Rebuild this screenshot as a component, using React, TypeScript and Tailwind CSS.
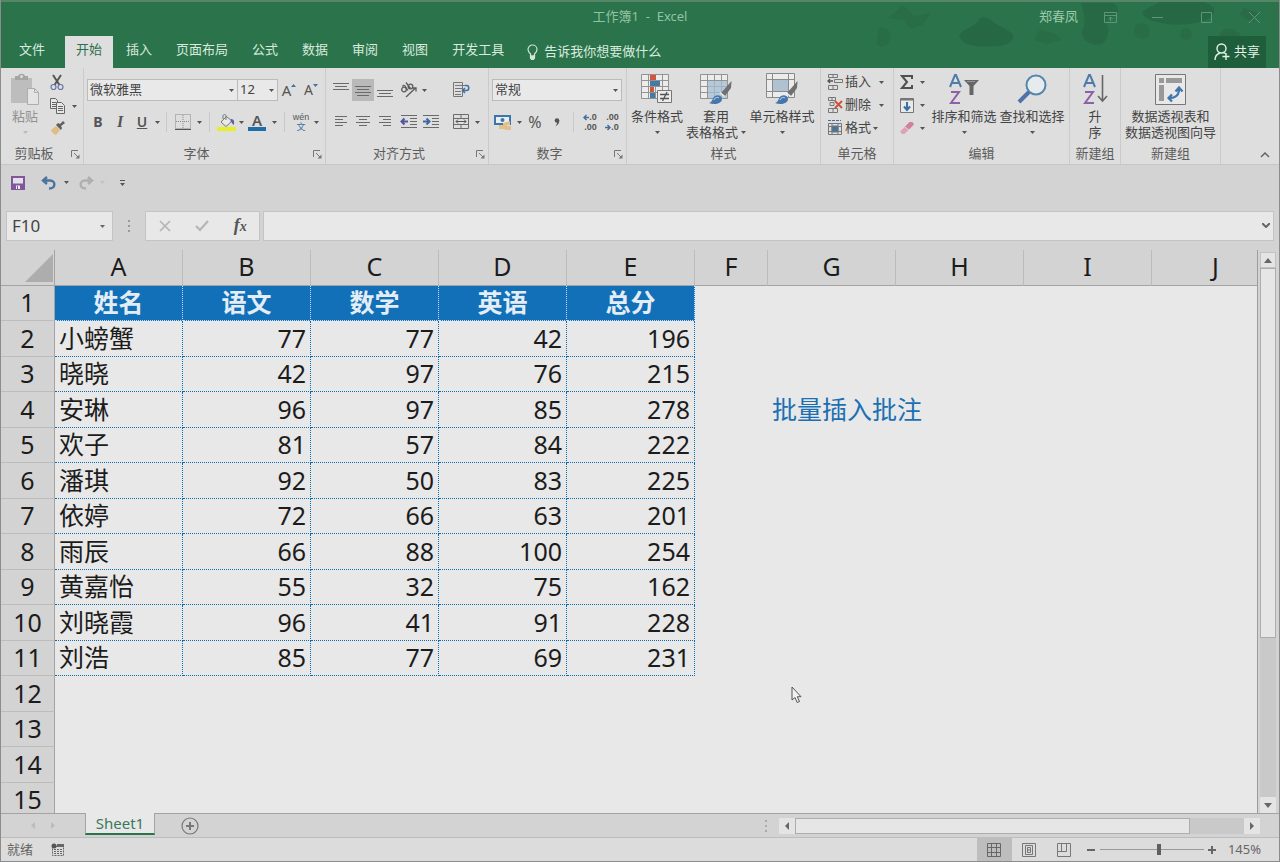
import { useState } from "react";
import type { ReactNode } from "react";

const columns = ["A", "B", "C", "D", "E", "F", "G", "H", "I", "J"];

const sheet: (string | number)[][] = [
  ["姓名", "语文", "数学", "英语", "总分"],
  ["小螃蟹", 77, 77, 42, 196],
  ["晓晓", 42, 97, 76, 215],
  ["安琳", 96, 97, 85, 278, "", "批量插入批注"],
  ["欢子", 81, 57, 84, 222],
  ["潘琪", 92, 50, 83, 225],
  ["依婷", 72, 66, 63, 201],
  ["雨辰", 66, 88, 100, 254],
  ["黄嘉怡", 55, 32, 75, 162],
  ["刘晓霞", 96, 41, 91, 228],
  ["刘浩", 85, 77, 69, 231],
  [],
  [],
  [],
  [],
];

const tabs = ["开始", "插入", "页面布局", "公式", "数据", "审阅", "视图", "开发工具"];

function Caret({ className = "text-[#555]" }: { className?: string }) {
  return (
    <svg className={`shrink-0 ${className}`} width="5" height="3" viewBox="0 0 5 3" fill="currentColor">
      <path d="M0 0h5L2.5 3z" />
    </svg>
  );
}

function CaretButton({ label, className = "w-2" }: { label: string; className?: string }) {
  return (
    <button aria-label={label} className={`flex h-[22px] shrink-0 items-center justify-center ${className}`}>
      <Caret />
    </button>
  );
}

function IconButton({
  label,
  className = "w-[22px]",
  children,
}: {
  label: string;
  className?: string;
  children: ReactNode;
}) {
  return (
    <button
      aria-label={label}
      className={`flex h-[22px] shrink-0 items-center justify-center text-[#555] ${className}`}
    >
      {children}
    </button>
  );
}

function Separator() {
  return <span className="mx-[5px] h-5 w-px shrink-0 bg-[#c8c8c8]" />;
}

function Group({
  title,
  launcher = false,
  className,
  children,
}: {
  title: string;
  launcher?: boolean;
  className: string;
  children: ReactNode;
}) {
  return (
    <section className={`flex shrink-0 flex-col border-r border-[#cbcbcb] ${className}`}>
      <div className="h-[76px]">{children}</div>
      <div className="flex h-5 items-center">
        <span className="flex-1 text-center text-[#5c5c5c]">{title}</span>
        {launcher && (
          <button aria-label={`${title}设置`} className="flex h-4 w-4 items-center justify-center">
            <svg width="9" height="9" viewBox="0 0 9 9" fill="none" stroke="#777">
              <path d="M.5 7V.5H7M3 3l4 4" />
              <path d="M8.500 4.500v4h-4z" fill="#777" stroke="none" />
            </svg>
          </button>
        )}
      </div>
    </section>
  );
}

function BigButton({
  icon,
  lines,
  className,
  caret = false,
}: {
  icon: ReactNode;
  lines: string[];
  className: string;
  caret?: boolean;
}) {
  return (
    <button className={`flex shrink-0 flex-col items-center pt-[5px] leading-4 text-[#444] ${className}`}>
      <span className="mb-[3px] flex h-8 items-center justify-center">{icon}</span>
      <span className="whitespace-nowrap">{lines[0]}</span>
      <span className="flex h-4 items-center gap-[3px] whitespace-nowrap">
        {lines[1]}
        {caret && <Caret />}
      </span>
    </button>
  );
}

function Lines({ rows }: { rows: [number, number, number][] }) {
  return (
    <svg width="16" height="16" viewBox="0 0 16 16" stroke="#6a6a6a">
      {rows.map(([x1, x2, y]) => (
        <path key={y} d={`M${x1} ${y}.5H${x2}`} />
      ))}
    </svg>
  );
}

function Indent({ right = false }: { right?: boolean }) {
  return (
    <svg width="18" height="16" viewBox="0 0 18 16" fill="none">
      <path d="M1 1.500h16M10 4.500h7M10 7.500h7M10 10.500h7M1 13.500h16" stroke="#6a6a6a" />
      {right ? (
        <path d="M1 7.500h6M4.500 4.500l3 3-3 3" stroke="#3d68a5" strokeWidth="2" />
      ) : (
        <path d="M2 7.500h6M4.500 4.500l-3 3 3 3" stroke="#5257a0" strokeWidth="2" />
      )}
    </svg>
  );
}

function TableGrid() {
  return (
    <path
      d="M.500 1.500h27v24H.500zM.500 7.500h27M.500 13.500h27M.500 19.500h27M7.500 1.500v24M14.500 1.500v24M21.500 1.500v24"
      fill="#ececec"
      stroke="#939393"
    />
  );
}

function StyleBrush() {
  return (
    <>
      <path d="M31.500 8l-.5 7-6 8-4-3z" fill="#707070" />
      <path d="M20 19.500l4.500 4" stroke="#eee" strokeWidth="1.500" />
      <path d="M9 30c4-1 3-5 6-7 3-2 7 0 7 3 0 5-8 6-13 4z" fill="#4577ad" />
      <path d="M14 27c1-3 4-3 5-2" stroke="#c8dcef" fill="none" />
    </>
  );
}

function SortLetters() {
  return (
    <>
      <path d="M1 13L6 1h1l5 12M3 9h7" stroke="#4e7ba8" strokeWidth="2" fill="none" />
      <path d="M2 18h8L2 29h9" stroke="#8b62a6" strokeWidth="2" fill="none" />
    </>
  );
}

function TitleBar() {
  return (
    <header className="relative bg-[#2b744b] text-[13px]">
      <svg
        className="absolute right-0 top-0 h-12 w-[460px]"
        viewBox="0 0 460 48"
        fill="#276542"
        aria-hidden="true"
      >
        <path d="M140 35c8-8 17-9 21-17 8-3 13 5 20 8l12 7c5 5-3 13-16 13-18 2-35 0-37-11z" opacity=".8" />
        <path d="M262 3h32c10 6 4 15-7 17 4 9 3 19-4 24-11 3-21-4-20-13 5-9 2-17-1-28z" opacity=".75" />
        <path d="M340 2h45c18 6 12 19-15 22-22 3-50-4-46-13z" opacity=".8" />
        <path d="M84 5l11 11 17-3-8 12-13 4-7-9-15-2z" opacity=".45" />
        <path d="M60 28c9-2 13 5 11 11-2 10-13 9-14 3z" opacity=".5" />
        <circle cx="323" cy="31" r="8" opacity=".5" />
        <circle cx="367" cy="34" r="6" opacity=".5" />
        <path d="M400 35c7-11 20-6 24 4h-26zM425 8l14 5-5 9-14-7z" opacity=".6" />
        <path d="M220 30l15 3 8 7-16 4-12-4z" opacity=".4" />
      </svg>
      <div className="relative grid h-9 grid-cols-[1fr_auto_1fr] items-center border-t-2 border-[#568668] pb-1">
        <span />
        <h1 className="whitespace-pre text-[#91c2a2]">工作簿1  -  Excel</h1>
        <div className="flex items-center justify-end pr-px text-[#5f9675]">
          <span className="mr-2 text-[#9bcaac]">郑春凤</span>
          <button aria-label="功能区显示选项" className="flex w-12 justify-center">
            <svg width="13" height="11" viewBox="0 0 13 11" fill="none" stroke="currentColor">
              <path d="M.500.500h12v10H.500zM.500 3.500h12M6.500 9V5M4.500 7l2-2 2 2" />
            </svg>
          </button>
          <button aria-label="最小化" className="flex w-12 justify-center">
            <svg width="12" height="11" viewBox="0 0 12 11" stroke="currentColor"><path d="M0 5.500h11" /></svg>
          </button>
          <button aria-label="最大化" className="flex w-12 justify-center">
            <svg width="11" height="11" viewBox="0 0 11 11" fill="none" stroke="currentColor"><path d="M.500.500h10v10H.500z" /></svg>
          </button>
          <button aria-label="关闭" className="flex w-12 justify-center">
            <svg width="11" height="11" viewBox="0 0 11 11" stroke="currentColor"><path d="M0 0l11 11M11 0L0 11" /></svg>
          </button>
        </div>
      </div>
      <nav className="relative flex h-8 items-stretch gap-0.5 pl-[7px] pr-[13px] text-[#d8eadf]">
        <button className="mr-[7px] px-[11px] pb-1">文件</button>
        {tabs.map((tab) => (
          <button
            key={tab}
            className={`px-[11px] pb-1 ${tab === "开始" ? "bg-[#dedede] text-[#2f6e4c]" : ""}`}
          >
            {tab}
          </button>
        ))}
        <button className="flex items-center gap-1.5 px-2.5">
          <svg width="11" height="16" viewBox="0 0 11 16" fill="none" stroke="#cfe6d8" strokeWidth="1.2">
            <path d="M3.500 12V10C2 8.500 1 7.500 1 5.500a4.500 4.500 0 019 0C10 7.500 9 8.500 7.500 10v2z" />
            <path d="M3.500 12h4v2l-1 1.300h-2l-1-1.300z" fill="#cfe6d8" />
          </svg>
          告诉我你想要做什么
        </button>
        <button className="ml-auto flex items-center gap-1 bg-[#1f5e3b] px-1.5 text-[#e6f2ea]">
          <svg width="16" height="18" viewBox="0 0 16 18" fill="none" stroke="currentColor" strokeWidth="1.4">
            <circle cx="7.500" cy="5.500" r="4.500" />
            <path d="M1 17c0-4 2-6 5-7M9 9l3 2M12 10v7M8.500 13.500h7" />
          </svg>
          共享
        </button>
      </nav>
    </header>
  );
}

function Ribbon() {
  return (
    <div className="flex border-b border-[#c6c6c6] bg-[#dedede] text-[13px]">
      <Group title="剪贴板" launcher className="w-[83px]">
        <div className="flex pl-[7px]">
          <button className="flex w-[34px] flex-col items-center pt-[5px] leading-4 text-[#929292]">
            <svg className="mb-[3px]" width="30" height="32" viewBox="0 0 30 32">
              <path d="M1 5h21v25H1z" fill="#bdbdbd" />
              <path d="M5 3h3c1-3 6-3 7 0h3v4H5z" fill="#a5a5a5" />
              <circle cx="11.500" cy="3.500" r="1.500" fill="#dedede" />
              <path d="M17.500 15.500h7l4 4v12h-11z" fill="#e4e4e4" stroke="#adadad" />
              <path d="M24.500 15.500v4h4" fill="none" stroke="#adadad" />
            </svg>
            粘贴
            <span className="flex h-4 items-center"><Caret className="text-[#bbb]" /></span>
          </button>
          <div className="flex flex-col pl-1 pt-[3px]">
            <IconButton label="剪切">
              <svg width="14" height="17" viewBox="0 0 14 17" fill="none">
                <path d="M3 1l6.500 10M11 1L4.500 11" stroke="#555" strokeWidth="2" />
                <circle cx="3.500" cy="13" r="2.500" stroke="#6577a5" strokeWidth="1.2" />
                <circle cx="10.500" cy="13" r="2.500" stroke="#6577a5" strokeWidth="1.2" />
              </svg>
            </IconButton>
            <div className="flex items-center pt-0.5">
              <IconButton label="复制">
                <svg width="15" height="16" viewBox="0 0 15 16" fill="#e6e6e6" stroke="#666">
                  <path d="M.500.500h5l2 2v8h-7zM2 4.500h4M2 6.500h4M2 8.500h4" />
                  <path d="M6.500 4.500h5l3 3v8h-8zM8 8.500h5M8 10.500h5M8 12.500h5" />
                </svg>
              </IconButton>
              <CaretButton label="复制选项" className="w-3" />
            </div>
            <IconButton label="格式刷">
              <svg width="15" height="14" viewBox="0 0 15 14">
                <path d="M1 9l5-4 4 4-4 5c-2-1-4-2-5-5z" fill="#dfbd85" />
                <path d="M6 4l5 5 1-2-1-2 4-3-2-2-3 3-2-1z" fill="#5f5f5f" />
              </svg>
            </IconButton>
          </div>
        </div>
      </Group>

      <Group title="字体" launcher className="w-[242px]">
        <div className="flex flex-col gap-2.5 pl-[3px] pt-[11px]">
          <div className="flex items-center">
            <div className="relative">
              <select aria-label="字体" className="block h-[22px] w-[151px] appearance-none border border-[#bbb] bg-[#e9e9e9] px-0.5 text-[#444]">
                <option>微软雅黑</option>
              </select>
              <Caret className="pointer-events-none absolute right-1 top-2.5 text-[#555]" />
            </div>
            <div className="relative">
              <select aria-label="字号" className="block h-[22px] w-10 appearance-none border border-l-0 border-[#bbb] bg-[#e9e9e9] px-0.5 text-[#444]">
                <option>12</option>
              </select>
              <Caret className="pointer-events-none absolute right-1 top-2.5 text-[#555]" />
            </div>
            <IconButton label="增大字号">
              <span className="text-[15px]">A</span>
              <svg className="mb-2.5" width="5" height="3" viewBox="0 0 5 3" fill="#4b6f9c"><path d="M0 3h5L2.500 0z" /></svg>
            </IconButton>
            <IconButton label="减小字号">
              <span className="text-sm">A</span>
              <Caret className="mb-2.5 text-[#4b6f9c]" />
            </IconButton>
          </div>
          <div className="flex items-center">
            <IconButton label="加粗"><b className="text-sm">B</b></IconButton>
            <IconButton label="倾斜"><i className="font-['Liberation_Serif',serif] text-base font-bold">I</i></IconButton>
            <IconButton label="下划线"><u className="text-sm font-semibold">U</u></IconButton>
            <CaretButton label="下划线选项" />
            <Separator />
            <IconButton label="边框">
              <svg width="16" height="16" viewBox="0 0 16 16" fill="none" stroke="#888">
                <path d="M.500.500h15v14H.500zM8 1v13M1 7.500h14" strokeDasharray="1 1" />
                <path d="M0 15.500h16" stroke="#555" />
              </svg>
            </IconButton>
            <CaretButton label="边框选项" className="w-2.5" />
            <Separator />
            <IconButton label="填充颜色">
              <svg width="19" height="17" viewBox="0 0 19 17" fill="none">
                <path d="M9.500 2.500L4 8l5 4.500L15 7z" stroke="#777" fill="#e9e9e9" />
                <path d="M9 6V2c0-2-3-2-3 0v3" stroke="#777" />
                <path d="M14 5c3 0 4 3 2.500 6-1.500-1-1.500-3-3-3.500z" fill="#5c5fa0" />
                <path d="M0 13h19v4H0z" fill="#e8ee2a" />
              </svg>
            </IconButton>
            <CaretButton label="填充选项" />
            <IconButton label="字体颜色" className="w-6">
              <span className="border-b-4 border-[#1f6ea8] px-1 text-[15px] font-semibold leading-[13px]">A</span>
            </IconButton>
            <CaretButton label="颜色选项" className="w-2.5" />
            <Separator />
            <IconButton label="拼音">
              <span className="flex flex-col items-center font-['Liberation_Sans','Noto_Sans_CJK_SC',sans-serif] text-[9px] leading-[10px]">
                <span>wén</span>
                <span className="text-[#3f70a3]">文</span>
              </span>
            </IconButton>
            <CaretButton label="拼音选项" />
          </div>
        </div>
      </Group>

      <Group title="对齐方式" launcher className="w-[163px]">
        <div className="flex flex-col gap-2.5 pl-1 pt-[11px]">
          <div className="flex items-center">
            <IconButton label="顶端对齐"><Lines rows={[[0, 16, 1], [2, 14, 4], [0, 16, 7]]} /></IconButton>
            <IconButton label="垂直居中" className="w-[22px] bg-[#b9b9b9]"><Lines rows={[[0, 16, 4], [2, 14, 7], [0, 16, 10], [2, 14, 13]]} /></IconButton>
            <IconButton label="底端对齐"><Lines rows={[[0, 16, 8], [2, 14, 11], [0, 16, 14]]} /></IconButton>
            <IconButton label="方向" className="ml-0.5 w-[22px]">
              <svg width="18" height="16" viewBox="0 0 18 16" fill="none" stroke="#5c5c5c" strokeWidth="1.3">
                <circle cx="4" cy="7.500" r="2.300" />
                <path d="M2.500 4.500c1-2 3-1 3.500 1l2 3M6 .500l4.500 6" />
                <circle cx="10.500" cy="4.500" r="2.300" />
                <path d="M6 15L15.500 6M12.500 6h3.500v3.500" />
              </svg>
            </IconButton>
            <CaretButton label="方向选项" />
            <IconButton label="自动换行" className="ml-[22px] w-[22px]">
              <svg width="17" height="16" viewBox="0 0 17 16" fill="none" stroke="#777">
                <path d="M.500.500h9v14h-9zM2 3.500h10M2 6.500h7M2 9.500h6M2 12.500h6" />
                <path d="M12 3.500h1.500c3 0 3 5 0 5H10M12 6l-2.500 2.500L12 11" stroke="#3f70a8" strokeWidth="1.5" />
              </svg>
            </IconButton>
          </div>
          <div className="flex items-center">
            <IconButton label="左对齐"><Lines rows={[[2, 14, 2], [2, 10, 5], [2, 14, 8], [2, 10, 11]]} /></IconButton>
            <IconButton label="居中"><Lines rows={[[1, 15, 2], [4, 12, 5], [1, 15, 8], [4, 12, 11]]} /></IconButton>
            <IconButton label="右对齐"><Lines rows={[[2, 14, 2], [6, 14, 5], [2, 14, 8], [6, 14, 11]]} /></IconButton>
            <IconButton label="减少缩进" className="ml-0.5 w-[22px]"><Indent /></IconButton>
            <IconButton label="增加缩进"><Indent right /></IconButton>
            <IconButton label="合并后居中" className="ml-2 w-[22px]">
              <svg width="17" height="16" viewBox="0 0 17 16" fill="none" stroke="#6c6c6c">
                <path d="M.500.500h15v14H.500zM.500 4.500h15M.500 10.500h15M8 .500v4M8 10.500v4" />
                <path d="M3 7.500h10M5 5.500l-2 2 2 2M11 5.500l2 2-2 2" stroke="#555" />
              </svg>
            </IconButton>
            <CaretButton label="合并选项" className="w-2.5" />
          </div>
        </div>
      </Group>

      <Group title="数字" launcher className="w-[138px]">
        <div className="flex flex-col gap-2.5 pl-[3px] pt-[11px]">
          <div className="relative w-[130px]">
            <select aria-label="数字格式" className="block h-[22px] w-full appearance-none border border-[#bbb] bg-[#e9e9e9] px-0.5 text-[#444]">
              <option>常规</option>
            </select>
            <Caret className="pointer-events-none absolute right-1 top-2.5 text-[#555]" />
          </div>
          <div className="flex items-center">
            <IconButton label="会计数字格式">
              <svg width="18" height="17" viewBox="0 0 18 17">
                <path d="M1 2h15v8H1z" fill="#e8eef3" stroke="#3e76aa" strokeWidth="2" />
                <circle cx="8.500" cy="6" r="2" fill="#3e76aa" />
                <path d="M9 9l7-2v4H9zM5 11h8v4H5zM11 12h6v4h-6z" fill="#e0c08b" />
              </svg>
            </IconButton>
            <CaretButton label="货币选项" className="w-2.5" />
            <IconButton label="百分比样式"><span className="text-base">%</span></IconButton>
            <IconButton label="千位分隔样式">
              <svg width="6" height="9" viewBox="0 0 6 9" fill="#555"><circle cx="3" cy="2.500" r="2.300" /><path d="M5.200 2c.3 3-1 5-4 6.500C2.500 7 3 6 3 4.500z" /></svg>
            </IconButton>
            <Separator />
            <IconButton label="增加小数位数">
              <span className="flex flex-col items-end font-['Liberation_Sans',sans-serif] text-[9px] font-bold leading-[10px]">
                <span className="flex items-center">
                  <svg width="6" height="7" viewBox="0 0 6 7" fill="none" stroke="#3f70a3" strokeWidth="1.5"><path d="M6 3.500H1M3.500 1L1 3.500 3.500 6" /></svg>
                  .0
                </span>
                <span>.00</span>
              </span>
            </IconButton>
            <IconButton label="减少小数位数">
              <span className="flex flex-col items-end font-['Liberation_Sans',sans-serif] text-[9px] font-bold leading-[10px]">
                <span>.00</span>
                <span className="flex items-center">
                  <svg width="6" height="7" viewBox="0 0 6 7" fill="none" stroke="#3f70a3" strokeWidth="1.5"><path d="M0 3.500h5M2.500 1L5 3.500 2.500 6" /></svg>
                  .0
                </span>
              </span>
            </IconButton>
          </div>
        </div>
      </Group>

      <Group title="样式" className="w-[194px]">
        <div className="flex pl-px">
          <BigButton
            className="w-[58px]"
            lines={["条件格式"]}
            caret
            icon={
              <svg width="32" height="32" viewBox="0 0 32 32" fill="none">
                <TableGrid />
                <path d="M9 2h6v5H9zM9 14h4v5H9z" fill="#d0573d" />
                <path d="M9 8h10v5H9zM9 20h5v5H9z" fill="#437ba5" />
                <path d="M16.500 17.500h14v12h-14z" fill="#ebebeb" stroke="#777" />
                <path d="M19 21.500h9M19 25.500h9M26 19l-4.500 9" stroke="#555" strokeWidth="1.3" />
              </svg>
            }
          />
          <BigButton
            className="w-[60px]"
            lines={["套用", "表格格式"]}
            caret
            icon={
              <svg width="32" height="32" viewBox="0 0 32 32" fill="none">
                <TableGrid />
                <path d="M8 8h19v17H8z" fill="#a3bdd1" opacity=".75" />
                <StyleBrush />
              </svg>
            }
          />
          <BigButton
            className="w-[72px]"
            lines={["单元格样式"]}
            caret
            icon={
              <svg width="33" height="32" viewBox="0 0 33 32" fill="none">
                <path d="M.500.500h28v24H.500zM.500 6.500h28M.500 18.500h28M6.500.500v24M22.500.500v24" fill="#ececec" stroke="#8a8a8a" />
                <path d="M7 7h15v11H7z" fill="#afc2d2" />
                <StyleBrush />
              </svg>
            }
          />
        </div>
      </Group>

      <Group title="单元格" className="w-[73px]">
        <div className="flex flex-col gap-px pl-1.5 pt-[3px] text-[#444]">
          <button className="flex h-[22px] items-center gap-0.5">
            <svg width="16" height="16" viewBox="0 0 16 16" fill="none" stroke="#777">
              <path d="M1.500.500h9v3h-9zM1.500 11.500h9v4h-9zM6 .500v3M6 11.500v4M7.500 5.500h8v3h-8z" />
              <path d="M6 7H1M3 5L1 7l2 2" stroke="#555" strokeWidth="1.3" />
            </svg>
            插入
            <span className="ml-1.5"><Caret /></span>
          </button>
          <button className="flex h-[22px] items-center gap-0.5">
            <svg width="16" height="16" viewBox="0 0 16 16" fill="none" stroke="#777">
              <path d="M1.500.500h7v3h-7zM1.500 11.500h9v4h-9zM5 .500v3M6 11.500v4M3 5.500h4v3H3z" />
              <path d="M8 4l7 7M15 4l-7 7" stroke="#cf4f3b" strokeWidth="1.8" />
            </svg>
            删除
            <span className="ml-1.5"><Caret /></span>
          </button>
          <button className="flex h-[22px] items-center gap-0.5">
            <svg width="16" height="16" viewBox="0 0 16 16" fill="none" stroke="#777">
              <path d="M1 .500h13" stroke="#3f70a3" strokeDasharray="3 1" />
              <path d="M1.500 3.500h13v11h-13zM1.500 6.500h13M1.500 11.500h13M5 3.500v11M11 3.500v11" />
              <path d="M5 6h6v6H5z" fill="#45759c" />
            </svg>
            格式
            <Caret />
          </button>
        </div>
      </Group>

      <Group title="编辑" className="w-[176px]">
        <div className="flex">
          <div className="flex flex-col gap-px pl-0.5 pt-[3px]">
            <div className="flex">
              <IconButton label="自动求和">
                <svg width="14" height="14" viewBox="0 0 14 14" fill="none" stroke="#505050" strokeWidth="2"><path d="M12 4V1H2l5 6-5 6h10v-3" /></svg>
              </IconButton>
              <CaretButton label="求和选项" />
            </div>
            <div className="flex">
              <IconButton label="填充">
                <svg width="14" height="15" viewBox="0 0 14 15" fill="none">
                  <path d="M.500.500h13v14H.500z" stroke="#777" fill="#e9e9e9" />
                  <path d="M.500 1.500h13" stroke="#777" strokeWidth="2" />
                  <path d="M7 4v8M4 8.500L7 12l3-3.500" stroke="#3a6ea5" strokeWidth="2" />
                </svg>
              </IconButton>
              <CaretButton label="填充选项" />
            </div>
            <div className="flex">
              <IconButton label="清除">
                <svg width="14" height="14" viewBox="0 0 14 14">
                  <path d="M9.500 1h3L14 3.500 9 8.500 5 5.500z" fill="#cf8299" />
                  <path d="M4.500 6l4 3-4 4H2L0 10.500z" fill="#e0a3b5" />
                </svg>
              </IconButton>
              <CaretButton label="清除选项" />
            </div>
          </div>
          <BigButton
            className="ml-1 w-[68px]"
            lines={["排序和筛选"]}
            caret
            icon={
              <svg width="31" height="30" viewBox="0 0 31 30" fill="none">
                <SortLetters />
                <path d="M15 6h15l-5.500 6v9h-4v-9z" fill="#666" />
                <path d="M18 7.500h8" stroke="#999" />
              </svg>
            }
          />
          <BigButton
            className="w-[68px]"
            lines={["查找和选择"]}
            caret
            icon={
              <svg width="30" height="30" viewBox="0 0 30 30" fill="none">
                <circle cx="19" cy="11" r="9.500" stroke="#5586ad" strokeWidth="2" fill="#e6ebee" />
                <path d="M12 18L2 28" stroke="#4d71a8" strokeWidth="4" />
              </svg>
            }
          />
        </div>
      </Group>

      <Group title="新建组" className="w-[51px]">
        <BigButton
          className="w-full"
          lines={["升", "序"]}
          icon={
            <svg width="25" height="30" viewBox="0 0 25 30" fill="none">
              <SortLetters />
              <path d="M19.500 1v26M15 22l4.500 5 4.500-5" stroke="#666" strokeWidth="1.6" />
            </svg>
          }
        />
      </Group>

      <Group title="新建组" className="w-[100px]">
        <BigButton
          className="w-full"
          lines={["数据透视表和", "数据透视图向导"]}
          icon={
            <svg width="31" height="31" viewBox="0 0 31 31" fill="none">
              <path d="M.500.500h30v30H.500z" fill="#e8e8e8" stroke="#777" />
              <path d="M4 4h5v5H4zM11 4h16v5H11zM4 11h5v16H4z" fill="#999" />
              <path d="M14 24c7 0 10-3 10-9M20.500 17.500l3.500-4 3.500 4M17 20.500L13.500 24l3.500 3.500" stroke="#3e75ac" strokeWidth="2.2" />
            </svg>
          }
        />
      </Group>

      <button aria-label="折叠功能区" className="ml-auto mr-[9px] self-end pb-1.5">
        <svg width="10" height="6" viewBox="0 0 10 6" fill="none" stroke="#666" strokeWidth="1.5"><path d="M1 5l4-4 4 4" /></svg>
      </button>
    </div>
  );
}

function QuickAccess() {
  return (
    <div className="flex h-[46px] items-center pb-[11px] pl-1.5">
      <IconButton label="保存">
        <svg width="14" height="14" viewBox="0 0 14 14" fill="none">
          <path d="M1 1h12v12H1z" stroke="#80579d" strokeWidth="2" fill="#e5e0e8" />
          <path d="M2 7.500h10V13H2z" fill="#80579d" />
          <path d="M5 9.500h4V13H5z" fill="#eee" />
          <path d="M6 10h1v3H6z" fill="#80579d" />
        </svg>
      </IconButton>
      <IconButton label="撤消" className="ml-[9px] w-[22px]">
        <svg width="16" height="14" viewBox="0 0 16 14" fill="none" stroke="#4a749e" strokeWidth="2.4">
          <path d="M6 1L2 4.500 6 8M2 4.500h7c6 0 6 8-1 8" />
        </svg>
      </IconButton>
      <CaretButton label="撤消选项" className="w-3" />
      <IconButton label="恢复" className="w-7">
        <svg width="16" height="14" viewBox="0 0 16 14" fill="none" stroke="#afafaf" strokeWidth="2.4">
          <path d="M10 1l4 3.500L10 8M14 4.500H7c-6 0-6 8 1 8" />
        </svg>
      </IconButton>
      <Caret className="text-[#c2c2c2]" />
      <IconButton label="自定义快速访问工具栏" className="ml-1.5 w-[22px]">
        <svg width="5" height="6" viewBox="0 0 5 6" fill="#555"><path d="M0 0h5v1H0zM0 3h5L2.500 6z" /></svg>
      </IconButton>
    </div>
  );
}

function FormulaBar() {
  const [cell, setCell] = useState("F10");
  const [formula, setFormula] = useState("");

  return (
    <div className="flex h-[30px] items-stretch pl-[5px] pr-[5px]">
      <div className="relative flex">
        <input
          aria-label="名称框"
          value={cell}
          onChange={(e) => setCell(e.target.value)}
          className="w-[107px] border border-[#c4c4c4] bg-[#e8e8e8] px-[5px] text-[17px] text-[#444] outline-none"
        />
        <Caret className="absolute right-2 top-3.5 text-[#666]" />
      </div>
      <span className="flex w-8 items-center justify-center">
        <svg width="2" height="12" viewBox="0 0 2 12" fill="#999"><path d="M0 0h2v2H0zM0 5h2v2H0zM0 10h2v2H0z" /></svg>
      </span>
      <div className="flex w-[115px] items-center justify-around border border-[#c4c4c4] bg-[#e8e8e8]">
        <IconButton label="取消">
          <svg width="12" height="12" viewBox="0 0 12 12" stroke="#b5b5b5" strokeWidth="1.7"><path d="M1 1l10 10M11 1L1 11" /></svg>
        </IconButton>
        <IconButton label="输入">
          <svg width="14" height="12" viewBox="0 0 14 12" fill="none" stroke="#b5b5b5" strokeWidth="2.2"><path d="M1 6l4 4 8-9" /></svg>
        </IconButton>
        <IconButton label="插入函数">
          <i className="font-['Liberation_Serif',serif] text-lg font-bold leading-5">f<span className="text-sm">x</span></i>
        </IconButton>
      </div>
      <div className="relative ml-[3px] flex flex-1">
        <input
          aria-label="编辑栏"
          value={formula}
          onChange={(e) => setFormula(e.target.value)}
          className="w-full border border-[#c4c4c4] bg-[#e8e8e8] px-2 text-[17px] outline-none"
        />
        <button aria-label="展开编辑栏" className="absolute right-1 top-3">
          <svg width="8" height="5" viewBox="0 0 8 5" fill="none" stroke="#666" strokeWidth="2"><path d="M0 0l4 4 4-4" /></svg>
        </button>
      </div>
    </div>
  );
}

function cellStyle(row: number, col: number) {
  if (row > 10 || col > 4) return "text-left text-[#1b6fb3]";
  if (row === 0) return "border-b border-r border-dotted border-[#cfe1f0] bg-[#1170b7] text-center font-bold text-[#e4edf5]";
  const align = col === 0 ? "text-left" : "text-right";
  return `border-b border-r border-dotted border-[#0f69ad] text-[#1c1c1c] ${align}`;
}

function Worksheet() {
  return (
    <div className="mt-[9px] flex min-h-0 flex-1">
      <div className="relative min-w-0 flex-1 overflow-hidden border-r border-[#9c9c9c] bg-[#e8e8e8]">
        <table className="w-[1279px] table-fixed border-separate border-spacing-0 text-[25px] leading-8 text-[#1c1c1c]">
          <colgroup>
            <col className="w-[54px]" />
            {columns.map((c) => (
              <col key={c} className={c === "F" ? "w-[73px]" : "w-32"} />
            ))}
          </colgroup>
          <thead>
            <tr className="h-9 bg-[#d3d3d3]">
              <th className="border-b border-r border-[#a3a3a3] p-0">
                <button aria-label="全选" className="flex w-full justify-end pr-px">
                  <svg width="28" height="28" viewBox="0 0 28 28" fill="#adadad"><path d="M28 0v28H0z" /></svg>
                </button>
              </th>
              {columns.map((c) => (
                <th key={c} scope="col" className="border-b border-r border-b-[#a3a3a3] border-r-[#bcbcbc] p-0 pb-[3px] font-normal">
                  {c}
                </th>
              ))}
            </tr>
          </thead>
          <tbody>
            {sheet.map((row, r) => (
              <tr key={r} className="odd:h-[35px] even:h-9">
                <th scope="row" className="border-b border-r border-b-[#bcbcbc] border-r-[#a3a3a3] bg-[#d3d3d3] p-0 pb-0.5 font-normal">
                  {r + 1}
                </th>
                {columns.map((c, i) => (
                  <td key={c} className={`whitespace-nowrap px-1 pb-0.5 pt-0 ${cellStyle(r, i)}`}>
                    {row[i]}
                  </td>
                ))}
              </tr>
            ))}
          </tbody>
        </table>
        {/* mouse pointer */}
        <svg className="absolute left-[790px] top-[436px]" width="12" height="18" viewBox="0 0 12 18" aria-hidden="true">
          <path d="M1 1v13l3-2.500 2.200 5 2.300-1-2.200-4.800H10z" fill="#f2f2f2" stroke="#555" />
        </svg>
      </div>
      <div className="ml-0.5 mr-[3px] mt-0.5 flex w-4 flex-col bg-[#c9c9c9]">
        <button aria-label="向上滚动" className="flex h-4 items-center justify-center border border-[#c2c2c2] bg-[#e4e4e4]">
          <svg width="8" height="5" viewBox="0 0 8 5" fill="#666"><path d="M0 5h8L4 0z" /></svg>
        </button>
        <div className="flex-1">
          <div className="h-[70%] border border-[#adadad] bg-[#e6e6e6]" />
        </div>
        <button aria-label="向下滚动" className="flex h-4 items-center justify-center bg-[#e4e4e4]">
          <svg width="8" height="5" viewBox="0 0 8 5" fill="#666"><path d="M0 0h8L4 5z" /></svg>
        </button>
      </div>
    </div>
  );
}

function SheetBar() {
  return (
    <div className="flex h-6 border-t border-[#a3a3a3]">
      <div className="flex w-[84px] items-center justify-center gap-4">
        <button aria-label="上一张"><svg width="4" height="7" viewBox="0 0 4 7" fill="#bbb"><path d="M4 0v7L0 3.500z" /></svg></button>
        <button aria-label="下一张"><svg width="4" height="7" viewBox="0 0 4 7" fill="#bbb"><path d="M0 0v7l4-3.500z" /></svg></button>
      </div>
      <button className="-mt-px h-[22px] w-[70px] border-x border-b-2 border-x-[#a3a3a3] border-b-[#2b744b] bg-[#e8e8e8] text-[15px] leading-[18px] text-[#39785a]">
        Sheet1
      </button>
      <button aria-label="新工作表" className="ml-[26px]">
        <svg width="18" height="18" viewBox="0 0 18 18" fill="none" stroke="#777">
          <circle cx="9" cy="9" r="8" strokeWidth="1.2" />
          <path d="M9 5v8M5 9h8" strokeWidth="2" />
        </svg>
      </button>
      <div className="ml-auto mr-[19px] flex w-[495px] items-center">
        <svg width="2" height="12" viewBox="0 0 2 12" fill="#aaa"><path d="M0 0h2v2H0zM0 5h2v2H0zM0 10h2v2H0z" /></svg>
        <button aria-label="向左滚动" className="ml-3 flex h-4 w-4 items-center justify-center bg-[#e4e4e4]">
          <svg width="4" height="8" viewBox="0 0 4 8" fill="#666"><path d="M4 0v8L0 4z" /></svg>
        </button>
        <div className="h-4 flex-1 bg-[#c9c9c9]">
          <div className="h-4 w-[88%] border border-[#adadad] bg-[#e6e6e6]" />
        </div>
        <button aria-label="向右滚动" className="flex h-4 w-4 items-center justify-center bg-[#e4e4e4]">
          <svg width="4" height="8" viewBox="0 0 4 8" fill="#666"><path d="M0 0v8l4-4z" /></svg>
        </button>
      </div>
    </div>
  );
}

function StatusBar() {
  const [zoom, setZoom] = useState(57);

  return (
    <footer className="flex h-6 items-center border-t border-[#bdbdbd] bg-[#dcdcdc] pl-1.5 pr-[18px] text-[13px] text-[#666]">
      <span>就绪</span>
      <button aria-label="宏录制" className="ml-[18px]">
        <svg width="14" height="13" viewBox="0 0 14 13" fill="none" stroke="#666">
          <path d="M1.500 3.500h11v9h-11zM3 6.500h8M3 8.500h8M3 10.500h8M7 1.500h6" strokeDasharray="2 1" />
          <path d="M6 1h7v3H6z" fill="#666" stroke="none" />
          <circle cx="3" cy="3" r="2.500" fill="#555" stroke="none" />
        </svg>
      </button>
      <button aria-label="普通" className="ml-auto flex h-6 w-[35px] items-center justify-center bg-[#bdbdbd]">
        <svg width="14" height="14" viewBox="0 0 14 14" fill="none" stroke="#666"><path d="M.500.500h13v13H.500zM.500 4.500h13M.500 9.500h13M4.500.500v13M9.500.500v13" /></svg>
      </button>
      <button aria-label="页面布局" className="flex h-6 w-[35px] items-center justify-center">
        <svg width="14" height="14" viewBox="0 0 14 14" fill="none" stroke="#777"><path d="M.500.500h13v13H.500zM3.500 2.500h7v9h-7zM5.500 4.500h3v5h-3zM5.500 7h3" /></svg>
      </button>
      <button aria-label="分页预览" className="flex h-6 w-[35px] items-center justify-center">
        <svg width="14" height="14" viewBox="0 0 14 14" fill="none" stroke="#777"><path d="M.500.500h13v13H.500zM4.500.500v8M9.500.500v8M.500 8.500h9" /></svg>
      </button>
      <button aria-label="缩小" className="mx-[5px]">
        <svg width="8" height="8" viewBox="0 0 8 8" fill="#666"><path d="M0 3h8v2H0z" /></svg>
      </button>
      <input
        type="range"
        aria-label="显示比例"
        value={zoom}
        onChange={(e) => setZoom(Number(e.target.value))}
        className="h-4 w-[104px] appearance-none bg-transparent [&::-webkit-slider-runnable-track]:h-px [&::-webkit-slider-runnable-track]:bg-[#999] [&::-webkit-slider-thumb]:-mt-[5px] [&::-webkit-slider-thumb]:h-[11px] [&::-webkit-slider-thumb]:w-1 [&::-webkit-slider-thumb]:appearance-none [&::-webkit-slider-thumb]:bg-[#5f5f5f]"
      />
      <button aria-label="放大" className="mx-1">
        <svg width="8" height="8" viewBox="0 0 8 8" fill="#666"><path d="M0 3h8v2H0zM3 0h2v8H3z" /></svg>
      </button>
      <span className="ml-2">145%</span>
    </footer>
  );
}

export default function App() {
  return (
    <div className="flex h-screen flex-col overflow-hidden border-x border-b border-[#8c8c8c] bg-[#d3d3d3] font-['Noto_Sans','Noto_Sans_CJK_SC',sans-serif]">
      <TitleBar />
      <Ribbon />
      <QuickAccess />
      <FormulaBar />
      <Worksheet />
      <SheetBar />
      <StatusBar />
    </div>
  );
}
